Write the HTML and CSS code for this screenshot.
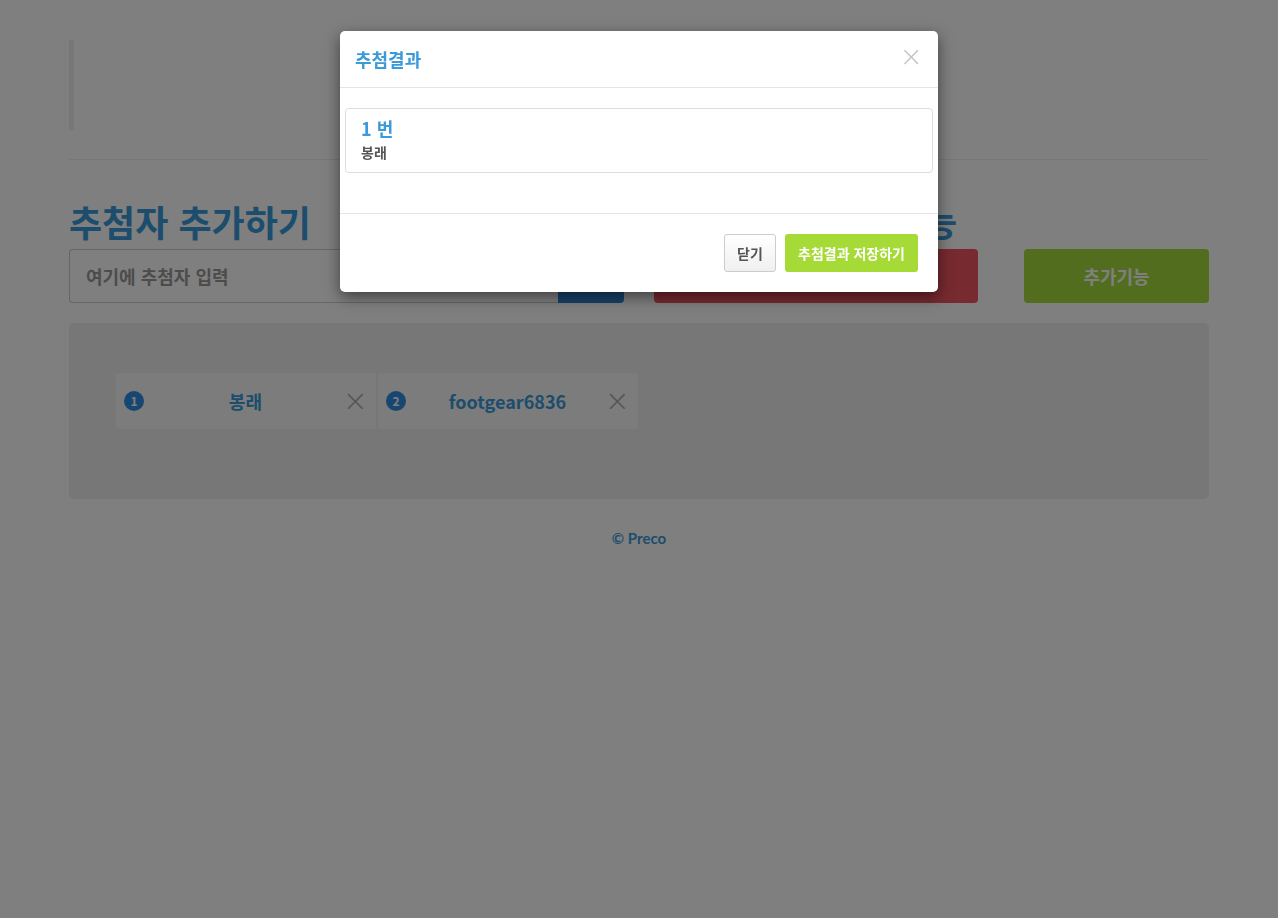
FILE: index.html
```html
<!DOCTYPE html>
<html lang="ko">
<head>
    <meta charset="UTF-8">
    <title>추첨기</title>
    <link rel="stylesheet" href="styles.css">
</head>
<body>

<div class="container">
    <!-- 상단 -->
    <div class="top_quote"></div>
    <hr class="top_line">

    <div class="row">
        <div class="col_add">
            <h2 class="sec_title">추첨자 추가하기</h2>
            <div class="input_group">
                <input type="text" id="entry" placeholder="여기에 추첨자 입력">
                <button class="btn_add"></button>
            </div>
        </div>
        <div class="col_draw">
            <h2 class="sec_title">추첨하기 및 추가기능</h2>
            <button class="btn_draw"></button>
        </div>
        <div class="col_more">
            <h2 class="sec_title">&nbsp;</h2>
            <button class="btn_more">추가기능</button>
        </div>
    </div>

    <div class="list_box">
        <div class="entry_item">
            <span class="badge">1</span>
            <span class="entry_name">봉래</span>
            <span class="entry_del">&times;</span>
        </div>
        <div class="entry_item">
            <span class="badge">2</span>
            <span class="entry_name">footgear6836</span>
            <span class="entry_del">&times;</span>
        </div>
    </div>

    <p class="footer">&copy; Preco</p>
</div>

<!-- 결과 모달 -->
<div class="modal_backdrop"></div>
<div class="modal">
    <div class="modal_header">
        <h4 class="modal_title">추첨결과</h4>
        <span class="modal_close">&times;</span>
    </div>
    <div class="modal_body">
        <div class="result_panel">
            <p class="result_no">1 번</p>
            <p class="result_name">봉래</p>
        </div>
    </div>
    <div class="modal_footer">
        <button class="btn_close">닫기</button>
        <button class="btn_save">추첨결과 저장하기</button>
    </div>
</div>

</body>
</html>
```

FILE: styles.css
```css
*{
    margin: 0px;
    padding: 0px;
    box-sizing: border-box;
}
body{
    background-color: white;
    font-family: "Noto Sans CJK KR", "Noto Sans", sans-serif;
    color: #333;
}

.container{
    width: 1140px;
    margin: 0 auto;
    padding-top: 40px;
}

.top_quote{
    height: 90px;
    border-left: 5px solid #eeeeee;
}
.top_line{
    border: 0;
    border-top: 1px solid #eeeeee;
    margin-top: 29px;
}

.row{
    display: flex;
    margin-top: 36px;
}
.col_add{
    width: 555px;
}
.col_draw{
    width: 324px;
    margin-left: 30px;
}
.col_more{
    width: 185px;
    margin-left: 46px;
}

.sec_title{
    font-size: 36px;
    font-weight: bold;
    line-height: 50px;
    height: 50px;
    color: #3b9ad9;
    margin-bottom: 3px;
    white-space: nowrap;
}
.col_draw .sec_title{
    letter-spacing: -1.5px;
}

.input_group{
    display: flex;
    height: 54px;
}
#entry{
    flex: 1;
    height: 54px;
    border: 1px solid #cccccc;
    border-right: 0;
    border-radius: 4px 0 0 4px;
    padding-left: 16px;
    font-family: inherit;
    font-size: 18px;
    font-weight: bold;
}
#entry::placeholder{
    color: #999999;
}
.btn_add{
    width: 66px;
    border: 0;
    background-color: #2e87d2;
    border-radius: 0 4px 4px 0;
}
.btn_draw{
    display: block;
    width: 100%;
    height: 54px;
    border: 0;
    border-radius: 4px;
    background-color: #ee5561;
}
.btn_more{
    display: block;
    width: 100%;
    height: 54px;
    border: 0;
    border-radius: 4px;
    background-color: #a6da3c;
    color: white;
    font-family: inherit;
    font-size: 18px;
    font-weight: bold;
}

.list_box{
    margin-top: 20px;
    height: 176px;
    background-color: #eeeeee;
    border-radius: 5px;
    padding: 50px 47px;
    display: flex;
    gap: 2px;
    align-items: flex-start;
}
.entry_item{
    width: 260px;
    height: 56px;
    background-color: #f8f8f8;
    border-radius: 2px;
    display: flex;
    align-items: center;
    padding: 0 8px;
}
.badge{
    width: 20px;
    height: 20px;
    border-radius: 50%;
    background-color: #2f8fe0;
    color: white;
    font-size: 12px;
    font-weight: bold;
    line-height: 20px;
    text-align: center;
}
.entry_name{
    flex: 1;
    text-align: center;
    font-size: 18px;
    font-weight: bold;
    color: #3b9ad9;
    padding-left: 4px;
}
.entry_del{
    color: #aaaaaa;
    font-size: 30px;
    font-weight: 300;
    line-height: 1;
    font-family: "DejaVu Sans", sans-serif;
}

.footer{
    text-align: center;
    margin-top: 30px;
    font-family: Lato, sans-serif;
    font-size: 15px;
    font-weight: bold;
    color: #3b9ad9;
}

/* 모달 */
.modal_backdrop{
    position: fixed;
    left: 0;
    top: 0;
    right: 0;
    bottom: 0;
    background-color: rgba(0, 0, 0, 0.5);
}
.modal{
    position: absolute;
    left: 340px;
    top: 31px;
    width: 598px;
    background-color: white;
    border-radius: 5px;
    box-shadow: 0 5px 15px rgba(0, 0, 0, 0.5);
}
.modal_header{
    height: 57px;
    border-bottom: 1px solid #e5e5e5;
    display: flex;
    align-items: center;
    justify-content: space-between;
    padding: 0 15px;
}
.modal_title{
    font-size: 18px;
    font-weight: bold;
    color: #3b9ad9;
}
.modal_close{
    color: #c4c4c4;
    font-size: 28px;
    font-family: "DejaVu Sans", sans-serif;
    font-weight: 300;
    margin-bottom: 6px;
    margin-right: 0px;
}
.modal_body{
    padding: 20px 5px 40px 5px;
}
.result_panel{
    border: 1px solid #dddddd;
    border-radius: 4px;
    height: 65px;
    padding: 5px 15px;
}
.result_no{
    font-size: 18px;
    font-weight: bold;
    color: #3b9ad9;
    line-height: 28px;
}
.result_name{
    font-size: 14px;
    font-weight: bold;
    color: #555555;
    line-height: 20px;
}
.modal_footer{
    border-top: 1px solid #e5e5e5;
    padding: 20px 20px 20px 20px;
    display: flex;
    justify-content: flex-end;
    gap: 9px;
}
.btn_close{
    width: 52px;
    height: 38px;
    border: 1px solid #cccccc;
    border-radius: 3px;
    background: linear-gradient(#ffffff, #f0f0f0);
    font-family: inherit;
    font-size: 14px;
    font-weight: bold;
    line-height: 36px;
    color: #555555;
}
.btn_save{
    width: 133px;
    height: 38px;
    border: 0;
    border-radius: 3px;
    background-color: #a6da37;
    font-family: inherit;
    font-size: 14px;
    font-weight: bold;
    line-height: 38px;
    color: white;
}
```
